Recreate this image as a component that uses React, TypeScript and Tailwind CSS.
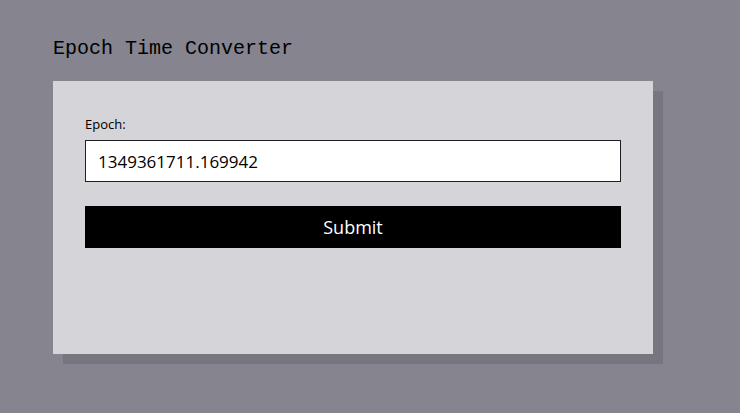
export default function App() {
  return (
    <div className="min-h-[413px] w-full bg-[#85848f] px-[53px] pt-[36px]">
      <h1 className="font-['Liberation_Mono','DejaVu_Sans_Mono',monospace] text-[20px] leading-[26px] text-black">
        Epoch Time Converter
      </h1>
      <div className="mt-[19px] h-[273px] w-[600px] bg-[#d5d4d9] px-[32px] pt-[34px] shadow-[10px_10px_0_0_#77767f]">
        <label className="block font-['Open_Sans',sans-serif] text-[13px] leading-[18px] text-black">
          Epoch:
        </label>
        <input
          type="text"
          defaultValue="1349361711.169942"
          className="mt-[7px] block h-[42px] w-full border border-[#1f1f23] bg-white px-[12px] font-['Open_Sans',sans-serif] text-[17px] text-black outline-none"
        />
        <button
          type="button"
          className="mt-[24px] block h-[42px] w-full bg-black font-['Open_Sans',sans-serif] text-[18px] text-white"
        >
          Submit
        </button>
      </div>
    </div>
  )
}
